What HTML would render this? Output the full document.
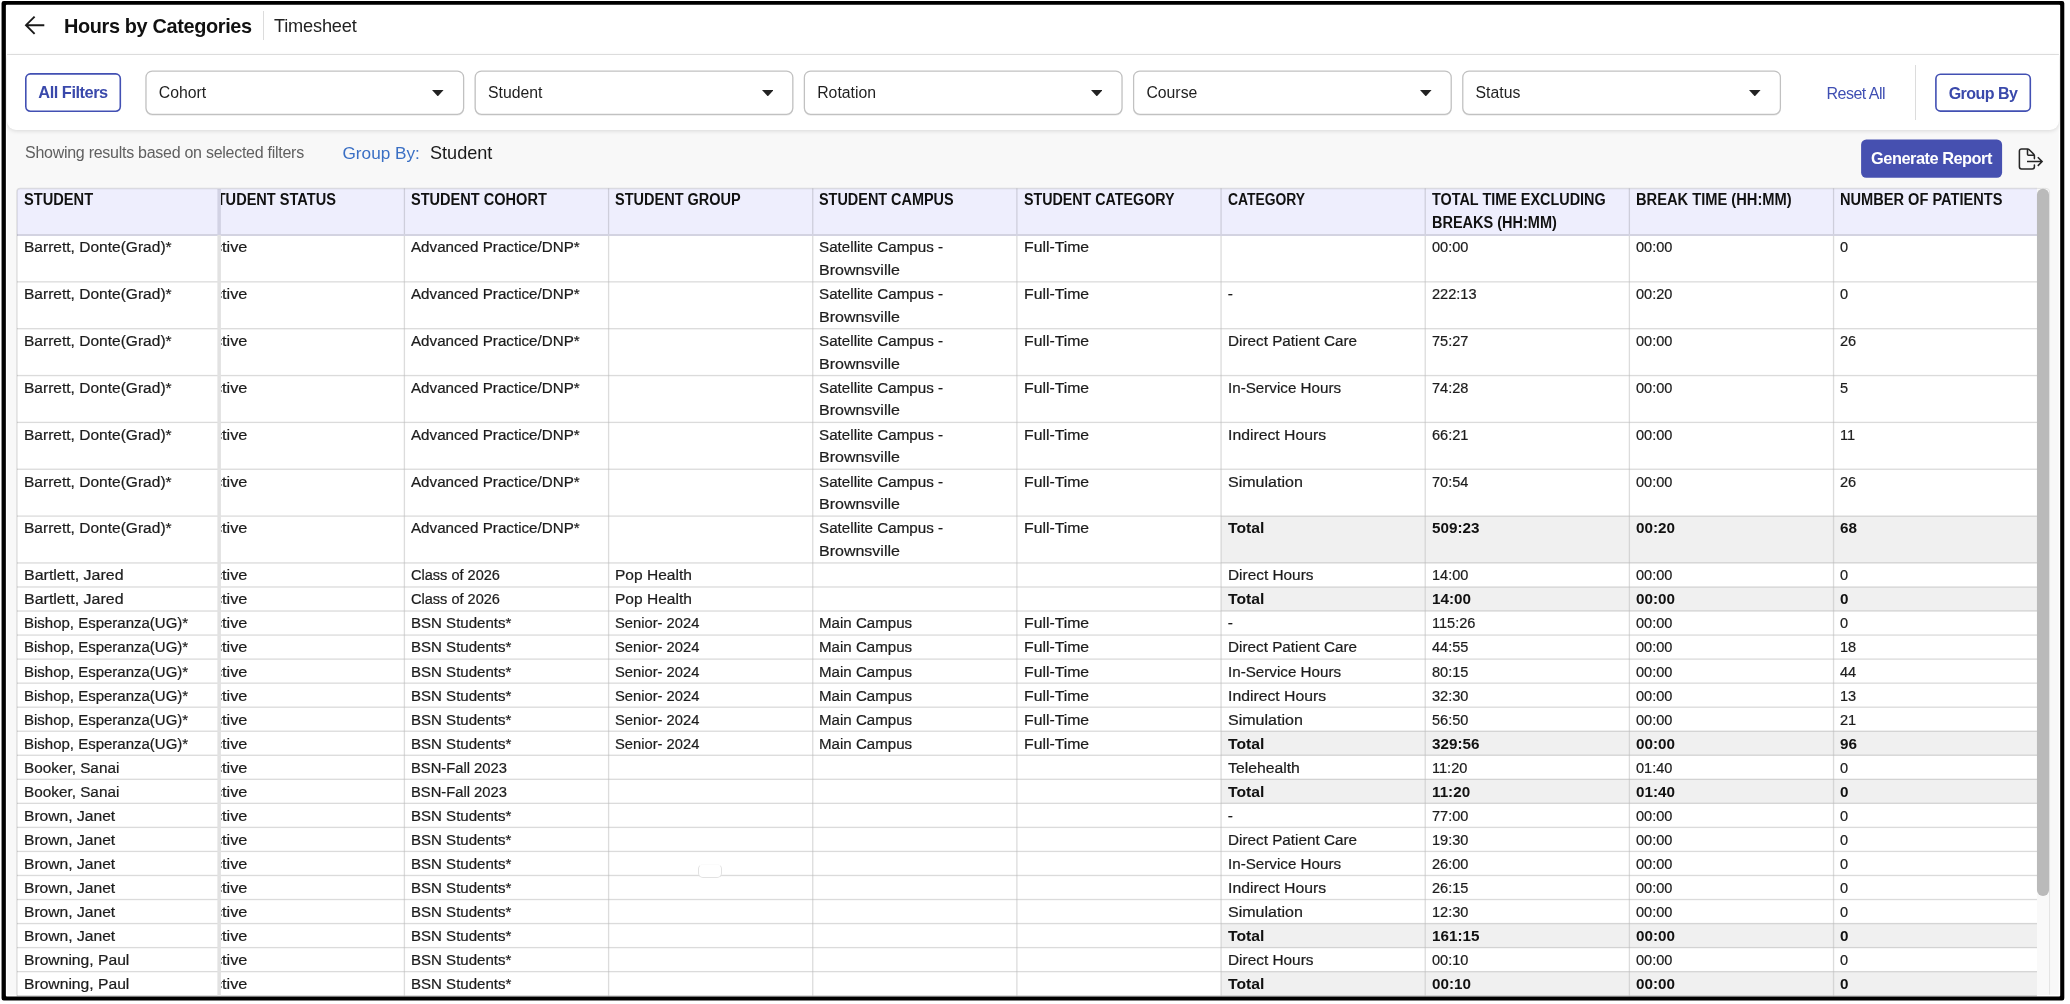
<!DOCTYPE html>
<html lang="en">
<head>
<meta charset="utf-8">
<title>Hours by Categories</title>
<style>
*{box-sizing:border-box;margin:0;padding:0}
html,body{width:2070px;height:1004px;overflow:hidden;background:#fff}
body{font-family:"Liberation Sans",sans-serif;font-size:16px;color:#1c1c1c;position:relative}
.abs{position:absolute}
#all{position:absolute;left:0;top:0;width:2070px;height:1004px;will-change:transform}
#top{position:absolute;left:7px;top:5px;width:2052px;height:50px;background:#fff;border-bottom:1px solid #e4e4e4}
#filters{position:absolute;left:7px;top:55px;width:2052px;height:75px;background:#fff;border-radius:0 0 9px 9px;box-shadow:0 1px 4px rgba(0,0,0,.13)}
.title{position:absolute;left:64px;top:13.7px;font-size:19.9px;letter-spacing:-.36px;font-weight:700;line-height:24px;color:#111;white-space:nowrap}
.sub{position:absolute;left:274px;top:14.2px;font-size:18.2px;letter-spacing:-.18px;line-height:24px;color:#222;white-space:nowrap}
.vdiv{position:absolute;background:#dcdcdc;width:1px}
.btn-o{position:absolute;color:#3a49ab;font-weight:700;font-size:16.4px;letter-spacing:-.48px;text-align:center;white-space:nowrap}
.dd{position:absolute;top:70.5px;height:44.4px;width:318.8px;font-size:15.8px;line-height:44.6px;padding-left:13.4px;color:#1f1f1f}
.dd svg{position:absolute;right:20.2px;top:19.1px}
.reset{position:absolute;left:1826.5px;top:81.5px;font-size:16px;letter-spacing:-.5px;line-height:24px;color:#3f4fb3;white-space:nowrap}
.show{position:absolute;left:25px;top:141px;font-size:16px;letter-spacing:-.27px;line-height:24px;color:#606060;white-space:nowrap}
.gb{position:absolute;left:342.5px;top:141px;font-size:17.2px;line-height:24px;color:#3a6fc4;white-space:nowrap}
.gbv{position:absolute;left:430px;top:141px;font-size:18.1px;line-height:24px;color:#1a1a1a;white-space:nowrap}
.gen{position:absolute;left:1861px;top:139.5px;width:141px;height:38.5px;color:#fff;font-weight:700;font-size:16.4px;letter-spacing:-.5px;line-height:37.6px;text-align:center;white-space:nowrap}

/* table */
.tbl{position:absolute;left:0;top:0;width:2070px;height:996.4px;overflow:hidden}
.c{position:absolute;overflow:hidden;padding-top:.9px;line-height:22.5px;font-size:15.4px;white-space:nowrap;color:#1c1c1c;-webkit-text-stroke:.22px #1c1c1c}
.x{display:inline-block;transform-origin:0 50%;white-space:nowrap}
.c.h{font-size:16px;font-weight:700;color:#111;padding-top:.2px;-webkit-text-stroke:0}
.c.b{font-weight:700;color:#111;-webkit-text-stroke:0}
#blip{position:absolute;left:698px;top:864px;width:24px;height:14px;border:1px solid #e2e2e2;border-top-color:#fbfbfb;border-radius:5px;background:#fff}
</style>
</head>
<body>
<div id="all">
<svg class="abs" style="left:0;top:0" width="2070" height="1004" viewBox="0 0 2070 1004"><rect x="7.2" y="5" width="2051.5" height="989.7" fill="#f8f8f8"/></svg>

<svg class="abs" style="left:0;top:0" width="2070" height="1004" viewBox="0 0 2070 1004"><rect x="17.00" y="188.40" width="2020.00" height="808.00" fill="#fff" rx="3"/><path d="M17.00 236.00V191.40a3 3 0 0 1 3-3H2037.00V236.00z" fill="#eeeefd"/><rect x="1221.06" y="516.10" width="815.94" height="46.85" fill="#f0f0f0"/><rect x="1221.06" y="586.99" width="815.94" height="24.04" fill="#f0f0f0"/><rect x="1221.06" y="731.23" width="815.94" height="24.04" fill="#f0f0f0"/><rect x="1221.06" y="779.31" width="815.94" height="24.04" fill="#f0f0f0"/><rect x="1221.06" y="923.55" width="815.94" height="24.04" fill="#f0f0f0"/><rect x="1221.06" y="971.63" width="815.94" height="24.04" fill="#f0f0f0"/><rect x="17.00" y="234.00" width="2020.00" height="2.00" fill="#000" fill-opacity=".11"/><rect x="17.00" y="281.18" width="2020.00" height="1.34" fill="#000" fill-opacity=".14"/><rect x="17.00" y="328.03" width="2020.00" height="1.34" fill="#000" fill-opacity=".14"/><rect x="17.00" y="374.88" width="2020.00" height="1.34" fill="#000" fill-opacity=".14"/><rect x="17.00" y="421.73" width="2020.00" height="1.34" fill="#000" fill-opacity=".14"/><rect x="17.00" y="468.58" width="2020.00" height="1.34" fill="#000" fill-opacity=".14"/><rect x="17.00" y="515.43" width="2020.00" height="1.34" fill="#000" fill-opacity=".14"/><rect x="17.00" y="562.28" width="2020.00" height="1.34" fill="#000" fill-opacity=".14"/><rect x="17.00" y="586.32" width="2020.00" height="1.34" fill="#000" fill-opacity=".14"/><rect x="17.00" y="610.36" width="2020.00" height="1.34" fill="#000" fill-opacity=".14"/><rect x="17.00" y="634.40" width="2020.00" height="1.34" fill="#000" fill-opacity=".14"/><rect x="17.00" y="658.44" width="2020.00" height="1.34" fill="#000" fill-opacity=".14"/><rect x="17.00" y="682.48" width="2020.00" height="1.34" fill="#000" fill-opacity=".14"/><rect x="17.00" y="706.52" width="2020.00" height="1.34" fill="#000" fill-opacity=".14"/><rect x="17.00" y="730.56" width="2020.00" height="1.34" fill="#000" fill-opacity=".14"/><rect x="17.00" y="754.60" width="2020.00" height="1.34" fill="#000" fill-opacity=".14"/><rect x="17.00" y="778.64" width="2020.00" height="1.34" fill="#000" fill-opacity=".14"/><rect x="17.00" y="802.68" width="2020.00" height="1.34" fill="#000" fill-opacity=".14"/><rect x="17.00" y="826.72" width="2020.00" height="1.34" fill="#000" fill-opacity=".14"/><rect x="17.00" y="850.76" width="2020.00" height="1.34" fill="#000" fill-opacity=".14"/><rect x="17.00" y="874.80" width="2020.00" height="1.34" fill="#000" fill-opacity=".14"/><rect x="17.00" y="898.84" width="2020.00" height="1.34" fill="#000" fill-opacity=".14"/><rect x="17.00" y="922.88" width="2020.00" height="1.34" fill="#000" fill-opacity=".14"/><rect x="17.00" y="946.92" width="2020.00" height="1.34" fill="#000" fill-opacity=".14"/><rect x="17.00" y="970.96" width="2020.00" height="1.34" fill="#000" fill-opacity=".14"/><rect x="17.00" y="995.00" width="2020.00" height="1.34" fill="#000" fill-opacity=".14"/><rect x="403.77" y="188.40" width="1.30" height="45.60" fill="#000" fill-opacity=".135"/><rect x="403.77" y="236.00" width="1.30" height="760.40" fill="#dcdcdc" fill-opacity=".5"/><rect x="403.77" y="236.00" width="1.30" height="760.40" fill="#000" fill-opacity=".07"/><rect x="607.93" y="188.40" width="1.30" height="45.60" fill="#000" fill-opacity=".135"/><rect x="607.93" y="236.00" width="1.30" height="760.40" fill="#dcdcdc" fill-opacity=".5"/><rect x="607.93" y="236.00" width="1.30" height="760.40" fill="#000" fill-opacity=".07"/><rect x="812.09" y="188.40" width="1.30" height="45.60" fill="#000" fill-opacity=".135"/><rect x="812.09" y="236.00" width="1.30" height="760.40" fill="#dcdcdc" fill-opacity=".5"/><rect x="812.09" y="236.00" width="1.30" height="760.40" fill="#000" fill-opacity=".07"/><rect x="1016.25" y="188.40" width="1.30" height="45.60" fill="#000" fill-opacity=".135"/><rect x="1016.25" y="236.00" width="1.30" height="760.40" fill="#dcdcdc" fill-opacity=".5"/><rect x="1016.25" y="236.00" width="1.30" height="760.40" fill="#000" fill-opacity=".07"/><rect x="1220.41" y="188.40" width="1.30" height="45.60" fill="#000" fill-opacity=".135"/><rect x="1220.41" y="236.00" width="1.30" height="760.40" fill="#dcdcdc" fill-opacity=".5"/><rect x="1220.41" y="236.00" width="1.30" height="760.40" fill="#000" fill-opacity=".07"/><rect x="1424.57" y="188.40" width="1.30" height="45.60" fill="#000" fill-opacity=".135"/><rect x="1424.57" y="236.00" width="1.30" height="760.40" fill="#dcdcdc" fill-opacity=".5"/><rect x="1424.57" y="236.00" width="1.30" height="760.40" fill="#000" fill-opacity=".07"/><rect x="1628.73" y="188.40" width="1.30" height="45.60" fill="#000" fill-opacity=".135"/><rect x="1628.73" y="236.00" width="1.30" height="760.40" fill="#dcdcdc" fill-opacity=".5"/><rect x="1628.73" y="236.00" width="1.30" height="760.40" fill="#000" fill-opacity=".07"/><rect x="1832.89" y="188.40" width="1.30" height="45.60" fill="#000" fill-opacity=".135"/><rect x="1832.89" y="236.00" width="1.30" height="760.40" fill="#dcdcdc" fill-opacity=".5"/><rect x="1832.89" y="236.00" width="1.30" height="760.40" fill="#000" fill-opacity=".07"/><rect x="17.50" y="236.00" width="199.90" height="0.01" fill="#fff"/><rect x="217.40" y="189.00" width="3.50" height="46.00" fill="#d2d2e4"/><rect x="217.40" y="235.00" width="3.50" height="761.40" fill="#e2e2e2"/><path d="M17.00 996.40V191.70a3.2 3.2 0 0 1 3.2-3.2H2037.00" fill="none" stroke="#000" stroke-opacity=".11" stroke-width="1.5"/></svg>
<div class="tbl">
<div class="c h" style="left:220.90px;top:189.00px;width:183.52px;height:46.00px"><div style="margin-left:-13.94px"><span class="x" style="transform:scaleX(0.9102)">STUDENT STATUS</span></div></div>
<div class="c h" style="left:411.12px;top:189.00px;width:196.46px;height:46.00px"><span class="x" style="transform:scaleX(0.9094)">STUDENT COHORT</span></div>
<div class="c h" style="left:615.28px;top:189.00px;width:196.46px;height:46.00px"><span class="x" style="transform:scaleX(0.9065)">STUDENT GROUP</span></div>
<div class="c h" style="left:819.44px;top:189.00px;width:196.46px;height:46.00px"><span class="x" style="transform:scaleX(0.9014)">STUDENT CAMPUS</span></div>
<div class="c h" style="left:1023.60px;top:189.00px;width:196.46px;height:46.00px"><span class="x" style="transform:scaleX(0.8912)">STUDENT CATEGORY</span></div>
<div class="c h" style="left:1227.76px;top:189.00px;width:196.46px;height:46.00px"><span class="x" style="transform:scaleX(0.8675)">CATEGORY</span></div>
<div class="c h" style="left:1431.92px;top:189.00px;width:196.46px;height:46.00px"><span class="x" style="transform:scaleX(0.9002)">TOTAL TIME EXCLUDING</span><br><span class="x" style="transform:scaleX(0.9060)">BREAKS (HH:MM)</span></div>
<div class="c h" style="left:1636.08px;top:189.00px;width:196.46px;height:46.00px"><span class="x" style="transform:scaleX(0.9167)">BREAK TIME (HH:MM)</span></div>
<div class="c h" style="left:1840.24px;top:189.00px;width:196.46px;height:46.00px"><span class="x" style="transform:scaleX(0.9121)">NUMBER OF PATIENTS</span></div>
<div class="c h" style="left:23.70px;top:189.00px;width:190px;height:46.00px"><span class="x" style="transform:scaleX(0.9145)">STUDENT</span></div>
<div class="c" style="left:220.90px;top:235.50px;width:183.52px;height:46.35px"><div style="margin-left:-17.54px"><span class="x" style="transform:scaleX(1.0600)">Active</span></div></div>
<div class="c" style="left:411.12px;top:235.50px;width:196.46px;height:46.35px"><span class="x" style="transform:scaleX(0.9860)">Advanced Practice/DNP*</span></div>
<div class="c" style="left:819.44px;top:235.50px;width:196.46px;height:46.35px"><span class="x" style="transform:scaleX(0.9871)">Satellite Campus -</span><br><span class="x" style="transform:scaleX(1.0397)">Brownsville</span></div>
<div class="c" style="left:1023.60px;top:235.50px;width:196.46px;height:46.35px"><span class="x" style="transform:scaleX(1.0243)">Full-Time</span></div>
<div class="c" style="left:1431.92px;top:235.50px;width:196.46px;height:46.35px"><span class="x" style="transform:scaleX(0.9450)">00:00</span></div>
<div class="c" style="left:1636.08px;top:235.50px;width:196.46px;height:46.35px"><span class="x" style="transform:scaleX(0.9450)">00:00</span></div>
<div class="c" style="left:1840.24px;top:235.50px;width:196.46px;height:46.35px"><span class="x" style="transform:scaleX(0.9450)">0</span></div>
<div class="c" style="left:23.70px;top:235.50px;width:190px;height:46.35px"><span class="x" style="transform:scaleX(1.0091)">Barrett, Donte(Grad)*</span></div>
<div class="c" style="left:220.90px;top:282.35px;width:183.52px;height:46.35px"><div style="margin-left:-17.54px"><span class="x" style="transform:scaleX(1.0600)">Active</span></div></div>
<div class="c" style="left:411.12px;top:282.35px;width:196.46px;height:46.35px"><span class="x" style="transform:scaleX(0.9860)">Advanced Practice/DNP*</span></div>
<div class="c" style="left:819.44px;top:282.35px;width:196.46px;height:46.35px"><span class="x" style="transform:scaleX(0.9871)">Satellite Campus -</span><br><span class="x" style="transform:scaleX(1.0397)">Brownsville</span></div>
<div class="c" style="left:1023.60px;top:282.35px;width:196.46px;height:46.35px"><span class="x" style="transform:scaleX(1.0243)">Full-Time</span></div>
<div class="c" style="left:1227.76px;top:282.35px;width:196.46px;height:46.35px"><span class="x" style="transform:scaleX(1.0000)">-</span></div>
<div class="c" style="left:1431.92px;top:282.35px;width:196.46px;height:46.35px"><span class="x" style="transform:scaleX(0.9450)">222:13</span></div>
<div class="c" style="left:1636.08px;top:282.35px;width:196.46px;height:46.35px"><span class="x" style="transform:scaleX(0.9450)">00:20</span></div>
<div class="c" style="left:1840.24px;top:282.35px;width:196.46px;height:46.35px"><span class="x" style="transform:scaleX(0.9450)">0</span></div>
<div class="c" style="left:23.70px;top:282.35px;width:190px;height:46.35px"><span class="x" style="transform:scaleX(1.0091)">Barrett, Donte(Grad)*</span></div>
<div class="c" style="left:220.90px;top:329.20px;width:183.52px;height:46.35px"><div style="margin-left:-17.54px"><span class="x" style="transform:scaleX(1.0600)">Active</span></div></div>
<div class="c" style="left:411.12px;top:329.20px;width:196.46px;height:46.35px"><span class="x" style="transform:scaleX(0.9860)">Advanced Practice/DNP*</span></div>
<div class="c" style="left:819.44px;top:329.20px;width:196.46px;height:46.35px"><span class="x" style="transform:scaleX(0.9871)">Satellite Campus -</span><br><span class="x" style="transform:scaleX(1.0397)">Brownsville</span></div>
<div class="c" style="left:1023.60px;top:329.20px;width:196.46px;height:46.35px"><span class="x" style="transform:scaleX(1.0243)">Full-Time</span></div>
<div class="c" style="left:1227.76px;top:329.20px;width:196.46px;height:46.35px"><span class="x" style="transform:scaleX(0.9926)">Direct Patient Care</span></div>
<div class="c" style="left:1431.92px;top:329.20px;width:196.46px;height:46.35px"><span class="x" style="transform:scaleX(0.9450)">75:27</span></div>
<div class="c" style="left:1636.08px;top:329.20px;width:196.46px;height:46.35px"><span class="x" style="transform:scaleX(0.9450)">00:00</span></div>
<div class="c" style="left:1840.24px;top:329.20px;width:196.46px;height:46.35px"><span class="x" style="transform:scaleX(0.9450)">26</span></div>
<div class="c" style="left:23.70px;top:329.20px;width:190px;height:46.35px"><span class="x" style="transform:scaleX(1.0091)">Barrett, Donte(Grad)*</span></div>
<div class="c" style="left:220.90px;top:376.05px;width:183.52px;height:46.35px"><div style="margin-left:-17.54px"><span class="x" style="transform:scaleX(1.0600)">Active</span></div></div>
<div class="c" style="left:411.12px;top:376.05px;width:196.46px;height:46.35px"><span class="x" style="transform:scaleX(0.9860)">Advanced Practice/DNP*</span></div>
<div class="c" style="left:819.44px;top:376.05px;width:196.46px;height:46.35px"><span class="x" style="transform:scaleX(0.9871)">Satellite Campus -</span><br><span class="x" style="transform:scaleX(1.0397)">Brownsville</span></div>
<div class="c" style="left:1023.60px;top:376.05px;width:196.46px;height:46.35px"><span class="x" style="transform:scaleX(1.0243)">Full-Time</span></div>
<div class="c" style="left:1227.76px;top:376.05px;width:196.46px;height:46.35px"><span class="x" style="transform:scaleX(0.9867)">In-Service Hours</span></div>
<div class="c" style="left:1431.92px;top:376.05px;width:196.46px;height:46.35px"><span class="x" style="transform:scaleX(0.9450)">74:28</span></div>
<div class="c" style="left:1636.08px;top:376.05px;width:196.46px;height:46.35px"><span class="x" style="transform:scaleX(0.9450)">00:00</span></div>
<div class="c" style="left:1840.24px;top:376.05px;width:196.46px;height:46.35px"><span class="x" style="transform:scaleX(0.9450)">5</span></div>
<div class="c" style="left:23.70px;top:376.05px;width:190px;height:46.35px"><span class="x" style="transform:scaleX(1.0091)">Barrett, Donte(Grad)*</span></div>
<div class="c" style="left:220.90px;top:422.90px;width:183.52px;height:46.35px"><div style="margin-left:-17.54px"><span class="x" style="transform:scaleX(1.0600)">Active</span></div></div>
<div class="c" style="left:411.12px;top:422.90px;width:196.46px;height:46.35px"><span class="x" style="transform:scaleX(0.9860)">Advanced Practice/DNP*</span></div>
<div class="c" style="left:819.44px;top:422.90px;width:196.46px;height:46.35px"><span class="x" style="transform:scaleX(0.9871)">Satellite Campus -</span><br><span class="x" style="transform:scaleX(1.0397)">Brownsville</span></div>
<div class="c" style="left:1023.60px;top:422.90px;width:196.46px;height:46.35px"><span class="x" style="transform:scaleX(1.0243)">Full-Time</span></div>
<div class="c" style="left:1227.76px;top:422.90px;width:196.46px;height:46.35px"><span class="x" style="transform:scaleX(1.0241)">Indirect Hours</span></div>
<div class="c" style="left:1431.92px;top:422.90px;width:196.46px;height:46.35px"><span class="x" style="transform:scaleX(0.9450)">66:21</span></div>
<div class="c" style="left:1636.08px;top:422.90px;width:196.46px;height:46.35px"><span class="x" style="transform:scaleX(0.9450)">00:00</span></div>
<div class="c" style="left:1840.24px;top:422.90px;width:196.46px;height:46.35px"><span class="x" style="transform:scaleX(0.9450)">11</span></div>
<div class="c" style="left:23.70px;top:422.90px;width:190px;height:46.35px"><span class="x" style="transform:scaleX(1.0091)">Barrett, Donte(Grad)*</span></div>
<div class="c" style="left:220.90px;top:469.75px;width:183.52px;height:46.35px"><div style="margin-left:-17.54px"><span class="x" style="transform:scaleX(1.0600)">Active</span></div></div>
<div class="c" style="left:411.12px;top:469.75px;width:196.46px;height:46.35px"><span class="x" style="transform:scaleX(0.9860)">Advanced Practice/DNP*</span></div>
<div class="c" style="left:819.44px;top:469.75px;width:196.46px;height:46.35px"><span class="x" style="transform:scaleX(0.9871)">Satellite Campus -</span><br><span class="x" style="transform:scaleX(1.0397)">Brownsville</span></div>
<div class="c" style="left:1023.60px;top:469.75px;width:196.46px;height:46.35px"><span class="x" style="transform:scaleX(1.0243)">Full-Time</span></div>
<div class="c" style="left:1227.76px;top:469.75px;width:196.46px;height:46.35px"><span class="x" style="transform:scaleX(1.0421)">Simulation</span></div>
<div class="c" style="left:1431.92px;top:469.75px;width:196.46px;height:46.35px"><span class="x" style="transform:scaleX(0.9450)">70:54</span></div>
<div class="c" style="left:1636.08px;top:469.75px;width:196.46px;height:46.35px"><span class="x" style="transform:scaleX(0.9450)">00:00</span></div>
<div class="c" style="left:1840.24px;top:469.75px;width:196.46px;height:46.35px"><span class="x" style="transform:scaleX(0.9450)">26</span></div>
<div class="c" style="left:23.70px;top:469.75px;width:190px;height:46.35px"><span class="x" style="transform:scaleX(1.0091)">Barrett, Donte(Grad)*</span></div>
<div class="c" style="left:220.90px;top:516.60px;width:183.52px;height:46.35px"><div style="margin-left:-17.54px"><span class="x" style="transform:scaleX(1.0600)">Active</span></div></div>
<div class="c" style="left:411.12px;top:516.60px;width:196.46px;height:46.35px"><span class="x" style="transform:scaleX(0.9860)">Advanced Practice/DNP*</span></div>
<div class="c" style="left:819.44px;top:516.60px;width:196.46px;height:46.35px"><span class="x" style="transform:scaleX(0.9871)">Satellite Campus -</span><br><span class="x" style="transform:scaleX(1.0397)">Brownsville</span></div>
<div class="c" style="left:1023.60px;top:516.60px;width:196.46px;height:46.35px"><span class="x" style="transform:scaleX(1.0243)">Full-Time</span></div>
<div class="c b" style="left:1227.76px;top:516.60px;width:196.46px;height:46.35px"><span class="x" style="transform:scaleX(1.0214)">Total</span></div>
<div class="c b" style="left:1431.92px;top:516.60px;width:196.46px;height:46.35px"><span class="x" style="transform:scaleX(0.9900)">509:23</span></div>
<div class="c b" style="left:1636.08px;top:516.60px;width:196.46px;height:46.35px"><span class="x" style="transform:scaleX(0.9900)">00:20</span></div>
<div class="c b" style="left:1840.24px;top:516.60px;width:196.46px;height:46.35px"><span class="x" style="transform:scaleX(0.9900)">68</span></div>
<div class="c" style="left:23.70px;top:516.60px;width:190px;height:46.35px"><span class="x" style="transform:scaleX(1.0091)">Barrett, Donte(Grad)*</span></div>
<div class="c" style="left:220.90px;top:563.45px;width:183.52px;height:23.54px"><div style="margin-left:-17.54px"><span class="x" style="transform:scaleX(1.0600)">Active</span></div></div>
<div class="c" style="left:411.12px;top:563.45px;width:196.46px;height:23.54px"><span class="x" style="transform:scaleX(0.9449)">Class of 2026</span></div>
<div class="c" style="left:615.28px;top:563.45px;width:196.46px;height:23.54px"><span class="x" style="transform:scaleX(1.0095)">Pop Health</span></div>
<div class="c" style="left:1227.76px;top:563.45px;width:196.46px;height:23.54px"><span class="x" style="transform:scaleX(0.9997)">Direct Hours</span></div>
<div class="c" style="left:1431.92px;top:563.45px;width:196.46px;height:23.54px"><span class="x" style="transform:scaleX(0.9450)">14:00</span></div>
<div class="c" style="left:1636.08px;top:563.45px;width:196.46px;height:23.54px"><span class="x" style="transform:scaleX(0.9450)">00:00</span></div>
<div class="c" style="left:1840.24px;top:563.45px;width:196.46px;height:23.54px"><span class="x" style="transform:scaleX(0.9450)">0</span></div>
<div class="c" style="left:23.70px;top:563.45px;width:190px;height:23.54px"><span class="x" style="transform:scaleX(1.0387)">Bartlett, Jared</span></div>
<div class="c" style="left:220.90px;top:587.49px;width:183.52px;height:23.54px"><div style="margin-left:-17.54px"><span class="x" style="transform:scaleX(1.0600)">Active</span></div></div>
<div class="c" style="left:411.12px;top:587.49px;width:196.46px;height:23.54px"><span class="x" style="transform:scaleX(0.9449)">Class of 2026</span></div>
<div class="c" style="left:615.28px;top:587.49px;width:196.46px;height:23.54px"><span class="x" style="transform:scaleX(1.0095)">Pop Health</span></div>
<div class="c b" style="left:1227.76px;top:587.49px;width:196.46px;height:23.54px"><span class="x" style="transform:scaleX(1.0214)">Total</span></div>
<div class="c b" style="left:1431.92px;top:587.49px;width:196.46px;height:23.54px"><span class="x" style="transform:scaleX(0.9900)">14:00</span></div>
<div class="c b" style="left:1636.08px;top:587.49px;width:196.46px;height:23.54px"><span class="x" style="transform:scaleX(0.9900)">00:00</span></div>
<div class="c b" style="left:1840.24px;top:587.49px;width:196.46px;height:23.54px"><span class="x" style="transform:scaleX(0.9900)">0</span></div>
<div class="c" style="left:23.70px;top:587.49px;width:190px;height:23.54px"><span class="x" style="transform:scaleX(1.0387)">Bartlett, Jared</span></div>
<div class="c" style="left:220.90px;top:611.53px;width:183.52px;height:23.54px"><div style="margin-left:-17.54px"><span class="x" style="transform:scaleX(1.0600)">Active</span></div></div>
<div class="c" style="left:411.12px;top:611.53px;width:196.46px;height:23.54px"><span class="x" style="transform:scaleX(0.9776)">BSN Students*</span></div>
<div class="c" style="left:615.28px;top:611.53px;width:196.46px;height:23.54px"><span class="x" style="transform:scaleX(0.9575)">Senior- 2024</span></div>
<div class="c" style="left:819.44px;top:611.53px;width:196.46px;height:23.54px"><span class="x" style="transform:scaleX(0.9804)">Main Campus</span></div>
<div class="c" style="left:1023.60px;top:611.53px;width:196.46px;height:23.54px"><span class="x" style="transform:scaleX(1.0243)">Full-Time</span></div>
<div class="c" style="left:1227.76px;top:611.53px;width:196.46px;height:23.54px"><span class="x" style="transform:scaleX(1.0000)">-</span></div>
<div class="c" style="left:1431.92px;top:611.53px;width:196.46px;height:23.54px"><span class="x" style="transform:scaleX(0.9450)">115:26</span></div>
<div class="c" style="left:1636.08px;top:611.53px;width:196.46px;height:23.54px"><span class="x" style="transform:scaleX(0.9450)">00:00</span></div>
<div class="c" style="left:1840.24px;top:611.53px;width:196.46px;height:23.54px"><span class="x" style="transform:scaleX(0.9450)">0</span></div>
<div class="c" style="left:23.70px;top:611.53px;width:190px;height:23.54px"><span class="x" style="transform:scaleX(0.9742)">Bishop, Esperanza(UG)*</span></div>
<div class="c" style="left:220.90px;top:635.57px;width:183.52px;height:23.54px"><div style="margin-left:-17.54px"><span class="x" style="transform:scaleX(1.0600)">Active</span></div></div>
<div class="c" style="left:411.12px;top:635.57px;width:196.46px;height:23.54px"><span class="x" style="transform:scaleX(0.9776)">BSN Students*</span></div>
<div class="c" style="left:615.28px;top:635.57px;width:196.46px;height:23.54px"><span class="x" style="transform:scaleX(0.9575)">Senior- 2024</span></div>
<div class="c" style="left:819.44px;top:635.57px;width:196.46px;height:23.54px"><span class="x" style="transform:scaleX(0.9804)">Main Campus</span></div>
<div class="c" style="left:1023.60px;top:635.57px;width:196.46px;height:23.54px"><span class="x" style="transform:scaleX(1.0243)">Full-Time</span></div>
<div class="c" style="left:1227.76px;top:635.57px;width:196.46px;height:23.54px"><span class="x" style="transform:scaleX(0.9926)">Direct Patient Care</span></div>
<div class="c" style="left:1431.92px;top:635.57px;width:196.46px;height:23.54px"><span class="x" style="transform:scaleX(0.9450)">44:55</span></div>
<div class="c" style="left:1636.08px;top:635.57px;width:196.46px;height:23.54px"><span class="x" style="transform:scaleX(0.9450)">00:00</span></div>
<div class="c" style="left:1840.24px;top:635.57px;width:196.46px;height:23.54px"><span class="x" style="transform:scaleX(0.9450)">18</span></div>
<div class="c" style="left:23.70px;top:635.57px;width:190px;height:23.54px"><span class="x" style="transform:scaleX(0.9742)">Bishop, Esperanza(UG)*</span></div>
<div class="c" style="left:220.90px;top:659.61px;width:183.52px;height:23.54px"><div style="margin-left:-17.54px"><span class="x" style="transform:scaleX(1.0600)">Active</span></div></div>
<div class="c" style="left:411.12px;top:659.61px;width:196.46px;height:23.54px"><span class="x" style="transform:scaleX(0.9776)">BSN Students*</span></div>
<div class="c" style="left:615.28px;top:659.61px;width:196.46px;height:23.54px"><span class="x" style="transform:scaleX(0.9575)">Senior- 2024</span></div>
<div class="c" style="left:819.44px;top:659.61px;width:196.46px;height:23.54px"><span class="x" style="transform:scaleX(0.9804)">Main Campus</span></div>
<div class="c" style="left:1023.60px;top:659.61px;width:196.46px;height:23.54px"><span class="x" style="transform:scaleX(1.0243)">Full-Time</span></div>
<div class="c" style="left:1227.76px;top:659.61px;width:196.46px;height:23.54px"><span class="x" style="transform:scaleX(0.9867)">In-Service Hours</span></div>
<div class="c" style="left:1431.92px;top:659.61px;width:196.46px;height:23.54px"><span class="x" style="transform:scaleX(0.9450)">80:15</span></div>
<div class="c" style="left:1636.08px;top:659.61px;width:196.46px;height:23.54px"><span class="x" style="transform:scaleX(0.9450)">00:00</span></div>
<div class="c" style="left:1840.24px;top:659.61px;width:196.46px;height:23.54px"><span class="x" style="transform:scaleX(0.9450)">44</span></div>
<div class="c" style="left:23.70px;top:659.61px;width:190px;height:23.54px"><span class="x" style="transform:scaleX(0.9742)">Bishop, Esperanza(UG)*</span></div>
<div class="c" style="left:220.90px;top:683.65px;width:183.52px;height:23.54px"><div style="margin-left:-17.54px"><span class="x" style="transform:scaleX(1.0600)">Active</span></div></div>
<div class="c" style="left:411.12px;top:683.65px;width:196.46px;height:23.54px"><span class="x" style="transform:scaleX(0.9776)">BSN Students*</span></div>
<div class="c" style="left:615.28px;top:683.65px;width:196.46px;height:23.54px"><span class="x" style="transform:scaleX(0.9575)">Senior- 2024</span></div>
<div class="c" style="left:819.44px;top:683.65px;width:196.46px;height:23.54px"><span class="x" style="transform:scaleX(0.9804)">Main Campus</span></div>
<div class="c" style="left:1023.60px;top:683.65px;width:196.46px;height:23.54px"><span class="x" style="transform:scaleX(1.0243)">Full-Time</span></div>
<div class="c" style="left:1227.76px;top:683.65px;width:196.46px;height:23.54px"><span class="x" style="transform:scaleX(1.0241)">Indirect Hours</span></div>
<div class="c" style="left:1431.92px;top:683.65px;width:196.46px;height:23.54px"><span class="x" style="transform:scaleX(0.9450)">32:30</span></div>
<div class="c" style="left:1636.08px;top:683.65px;width:196.46px;height:23.54px"><span class="x" style="transform:scaleX(0.9450)">00:00</span></div>
<div class="c" style="left:1840.24px;top:683.65px;width:196.46px;height:23.54px"><span class="x" style="transform:scaleX(0.9450)">13</span></div>
<div class="c" style="left:23.70px;top:683.65px;width:190px;height:23.54px"><span class="x" style="transform:scaleX(0.9742)">Bishop, Esperanza(UG)*</span></div>
<div class="c" style="left:220.90px;top:707.69px;width:183.52px;height:23.54px"><div style="margin-left:-17.54px"><span class="x" style="transform:scaleX(1.0600)">Active</span></div></div>
<div class="c" style="left:411.12px;top:707.69px;width:196.46px;height:23.54px"><span class="x" style="transform:scaleX(0.9776)">BSN Students*</span></div>
<div class="c" style="left:615.28px;top:707.69px;width:196.46px;height:23.54px"><span class="x" style="transform:scaleX(0.9575)">Senior- 2024</span></div>
<div class="c" style="left:819.44px;top:707.69px;width:196.46px;height:23.54px"><span class="x" style="transform:scaleX(0.9804)">Main Campus</span></div>
<div class="c" style="left:1023.60px;top:707.69px;width:196.46px;height:23.54px"><span class="x" style="transform:scaleX(1.0243)">Full-Time</span></div>
<div class="c" style="left:1227.76px;top:707.69px;width:196.46px;height:23.54px"><span class="x" style="transform:scaleX(1.0421)">Simulation</span></div>
<div class="c" style="left:1431.92px;top:707.69px;width:196.46px;height:23.54px"><span class="x" style="transform:scaleX(0.9450)">56:50</span></div>
<div class="c" style="left:1636.08px;top:707.69px;width:196.46px;height:23.54px"><span class="x" style="transform:scaleX(0.9450)">00:00</span></div>
<div class="c" style="left:1840.24px;top:707.69px;width:196.46px;height:23.54px"><span class="x" style="transform:scaleX(0.9450)">21</span></div>
<div class="c" style="left:23.70px;top:707.69px;width:190px;height:23.54px"><span class="x" style="transform:scaleX(0.9742)">Bishop, Esperanza(UG)*</span></div>
<div class="c" style="left:220.90px;top:731.73px;width:183.52px;height:23.54px"><div style="margin-left:-17.54px"><span class="x" style="transform:scaleX(1.0600)">Active</span></div></div>
<div class="c" style="left:411.12px;top:731.73px;width:196.46px;height:23.54px"><span class="x" style="transform:scaleX(0.9776)">BSN Students*</span></div>
<div class="c" style="left:615.28px;top:731.73px;width:196.46px;height:23.54px"><span class="x" style="transform:scaleX(0.9575)">Senior- 2024</span></div>
<div class="c" style="left:819.44px;top:731.73px;width:196.46px;height:23.54px"><span class="x" style="transform:scaleX(0.9804)">Main Campus</span></div>
<div class="c" style="left:1023.60px;top:731.73px;width:196.46px;height:23.54px"><span class="x" style="transform:scaleX(1.0243)">Full-Time</span></div>
<div class="c b" style="left:1227.76px;top:731.73px;width:196.46px;height:23.54px"><span class="x" style="transform:scaleX(1.0214)">Total</span></div>
<div class="c b" style="left:1431.92px;top:731.73px;width:196.46px;height:23.54px"><span class="x" style="transform:scaleX(0.9900)">329:56</span></div>
<div class="c b" style="left:1636.08px;top:731.73px;width:196.46px;height:23.54px"><span class="x" style="transform:scaleX(0.9900)">00:00</span></div>
<div class="c b" style="left:1840.24px;top:731.73px;width:196.46px;height:23.54px"><span class="x" style="transform:scaleX(0.9900)">96</span></div>
<div class="c" style="left:23.70px;top:731.73px;width:190px;height:23.54px"><span class="x" style="transform:scaleX(0.9742)">Bishop, Esperanza(UG)*</span></div>
<div class="c" style="left:220.90px;top:755.77px;width:183.52px;height:23.54px"><div style="margin-left:-17.54px"><span class="x" style="transform:scaleX(1.0600)">Active</span></div></div>
<div class="c" style="left:411.12px;top:755.77px;width:196.46px;height:23.54px"><span class="x" style="transform:scaleX(0.9581)">BSN-Fall 2023</span></div>
<div class="c" style="left:1227.76px;top:755.77px;width:196.46px;height:23.54px"><span class="x" style="transform:scaleX(1.0243)">Telehealth</span></div>
<div class="c" style="left:1431.92px;top:755.77px;width:196.46px;height:23.54px"><span class="x" style="transform:scaleX(0.9450)">11:20</span></div>
<div class="c" style="left:1636.08px;top:755.77px;width:196.46px;height:23.54px"><span class="x" style="transform:scaleX(0.9450)">01:40</span></div>
<div class="c" style="left:1840.24px;top:755.77px;width:196.46px;height:23.54px"><span class="x" style="transform:scaleX(0.9450)">0</span></div>
<div class="c" style="left:23.70px;top:755.77px;width:190px;height:23.54px"><span class="x" style="transform:scaleX(0.9946)">Booker, Sanai</span></div>
<div class="c" style="left:220.90px;top:779.81px;width:183.52px;height:23.54px"><div style="margin-left:-17.54px"><span class="x" style="transform:scaleX(1.0600)">Active</span></div></div>
<div class="c" style="left:411.12px;top:779.81px;width:196.46px;height:23.54px"><span class="x" style="transform:scaleX(0.9581)">BSN-Fall 2023</span></div>
<div class="c b" style="left:1227.76px;top:779.81px;width:196.46px;height:23.54px"><span class="x" style="transform:scaleX(1.0214)">Total</span></div>
<div class="c b" style="left:1431.92px;top:779.81px;width:196.46px;height:23.54px"><span class="x" style="transform:scaleX(0.9900)">11:20</span></div>
<div class="c b" style="left:1636.08px;top:779.81px;width:196.46px;height:23.54px"><span class="x" style="transform:scaleX(0.9900)">01:40</span></div>
<div class="c b" style="left:1840.24px;top:779.81px;width:196.46px;height:23.54px"><span class="x" style="transform:scaleX(0.9900)">0</span></div>
<div class="c" style="left:23.70px;top:779.81px;width:190px;height:23.54px"><span class="x" style="transform:scaleX(0.9946)">Booker, Sanai</span></div>
<div class="c" style="left:220.90px;top:803.85px;width:183.52px;height:23.54px"><div style="margin-left:-17.54px"><span class="x" style="transform:scaleX(1.0600)">Active</span></div></div>
<div class="c" style="left:411.12px;top:803.85px;width:196.46px;height:23.54px"><span class="x" style="transform:scaleX(0.9776)">BSN Students*</span></div>
<div class="c" style="left:1227.76px;top:803.85px;width:196.46px;height:23.54px"><span class="x" style="transform:scaleX(1.0000)">-</span></div>
<div class="c" style="left:1431.92px;top:803.85px;width:196.46px;height:23.54px"><span class="x" style="transform:scaleX(0.9450)">77:00</span></div>
<div class="c" style="left:1636.08px;top:803.85px;width:196.46px;height:23.54px"><span class="x" style="transform:scaleX(0.9450)">00:00</span></div>
<div class="c" style="left:1840.24px;top:803.85px;width:196.46px;height:23.54px"><span class="x" style="transform:scaleX(0.9450)">0</span></div>
<div class="c" style="left:23.70px;top:803.85px;width:190px;height:23.54px"><span class="x" style="transform:scaleX(1.0151)">Brown, Janet</span></div>
<div class="c" style="left:220.90px;top:827.89px;width:183.52px;height:23.54px"><div style="margin-left:-17.54px"><span class="x" style="transform:scaleX(1.0600)">Active</span></div></div>
<div class="c" style="left:411.12px;top:827.89px;width:196.46px;height:23.54px"><span class="x" style="transform:scaleX(0.9776)">BSN Students*</span></div>
<div class="c" style="left:1227.76px;top:827.89px;width:196.46px;height:23.54px"><span class="x" style="transform:scaleX(0.9926)">Direct Patient Care</span></div>
<div class="c" style="left:1431.92px;top:827.89px;width:196.46px;height:23.54px"><span class="x" style="transform:scaleX(0.9450)">19:30</span></div>
<div class="c" style="left:1636.08px;top:827.89px;width:196.46px;height:23.54px"><span class="x" style="transform:scaleX(0.9450)">00:00</span></div>
<div class="c" style="left:1840.24px;top:827.89px;width:196.46px;height:23.54px"><span class="x" style="transform:scaleX(0.9450)">0</span></div>
<div class="c" style="left:23.70px;top:827.89px;width:190px;height:23.54px"><span class="x" style="transform:scaleX(1.0151)">Brown, Janet</span></div>
<div class="c" style="left:220.90px;top:851.93px;width:183.52px;height:23.54px"><div style="margin-left:-17.54px"><span class="x" style="transform:scaleX(1.0600)">Active</span></div></div>
<div class="c" style="left:411.12px;top:851.93px;width:196.46px;height:23.54px"><span class="x" style="transform:scaleX(0.9776)">BSN Students*</span></div>
<div class="c" style="left:1227.76px;top:851.93px;width:196.46px;height:23.54px"><span class="x" style="transform:scaleX(0.9867)">In-Service Hours</span></div>
<div class="c" style="left:1431.92px;top:851.93px;width:196.46px;height:23.54px"><span class="x" style="transform:scaleX(0.9450)">26:00</span></div>
<div class="c" style="left:1636.08px;top:851.93px;width:196.46px;height:23.54px"><span class="x" style="transform:scaleX(0.9450)">00:00</span></div>
<div class="c" style="left:1840.24px;top:851.93px;width:196.46px;height:23.54px"><span class="x" style="transform:scaleX(0.9450)">0</span></div>
<div class="c" style="left:23.70px;top:851.93px;width:190px;height:23.54px"><span class="x" style="transform:scaleX(1.0151)">Brown, Janet</span></div>
<div class="c" style="left:220.90px;top:875.97px;width:183.52px;height:23.54px"><div style="margin-left:-17.54px"><span class="x" style="transform:scaleX(1.0600)">Active</span></div></div>
<div class="c" style="left:411.12px;top:875.97px;width:196.46px;height:23.54px"><span class="x" style="transform:scaleX(0.9776)">BSN Students*</span></div>
<div class="c" style="left:1227.76px;top:875.97px;width:196.46px;height:23.54px"><span class="x" style="transform:scaleX(1.0241)">Indirect Hours</span></div>
<div class="c" style="left:1431.92px;top:875.97px;width:196.46px;height:23.54px"><span class="x" style="transform:scaleX(0.9450)">26:15</span></div>
<div class="c" style="left:1636.08px;top:875.97px;width:196.46px;height:23.54px"><span class="x" style="transform:scaleX(0.9450)">00:00</span></div>
<div class="c" style="left:1840.24px;top:875.97px;width:196.46px;height:23.54px"><span class="x" style="transform:scaleX(0.9450)">0</span></div>
<div class="c" style="left:23.70px;top:875.97px;width:190px;height:23.54px"><span class="x" style="transform:scaleX(1.0151)">Brown, Janet</span></div>
<div class="c" style="left:220.90px;top:900.01px;width:183.52px;height:23.54px"><div style="margin-left:-17.54px"><span class="x" style="transform:scaleX(1.0600)">Active</span></div></div>
<div class="c" style="left:411.12px;top:900.01px;width:196.46px;height:23.54px"><span class="x" style="transform:scaleX(0.9776)">BSN Students*</span></div>
<div class="c" style="left:1227.76px;top:900.01px;width:196.46px;height:23.54px"><span class="x" style="transform:scaleX(1.0421)">Simulation</span></div>
<div class="c" style="left:1431.92px;top:900.01px;width:196.46px;height:23.54px"><span class="x" style="transform:scaleX(0.9450)">12:30</span></div>
<div class="c" style="left:1636.08px;top:900.01px;width:196.46px;height:23.54px"><span class="x" style="transform:scaleX(0.9450)">00:00</span></div>
<div class="c" style="left:1840.24px;top:900.01px;width:196.46px;height:23.54px"><span class="x" style="transform:scaleX(0.9450)">0</span></div>
<div class="c" style="left:23.70px;top:900.01px;width:190px;height:23.54px"><span class="x" style="transform:scaleX(1.0151)">Brown, Janet</span></div>
<div class="c" style="left:220.90px;top:924.05px;width:183.52px;height:23.54px"><div style="margin-left:-17.54px"><span class="x" style="transform:scaleX(1.0600)">Active</span></div></div>
<div class="c" style="left:411.12px;top:924.05px;width:196.46px;height:23.54px"><span class="x" style="transform:scaleX(0.9776)">BSN Students*</span></div>
<div class="c b" style="left:1227.76px;top:924.05px;width:196.46px;height:23.54px"><span class="x" style="transform:scaleX(1.0214)">Total</span></div>
<div class="c b" style="left:1431.92px;top:924.05px;width:196.46px;height:23.54px"><span class="x" style="transform:scaleX(0.9900)">161:15</span></div>
<div class="c b" style="left:1636.08px;top:924.05px;width:196.46px;height:23.54px"><span class="x" style="transform:scaleX(0.9900)">00:00</span></div>
<div class="c b" style="left:1840.24px;top:924.05px;width:196.46px;height:23.54px"><span class="x" style="transform:scaleX(0.9900)">0</span></div>
<div class="c" style="left:23.70px;top:924.05px;width:190px;height:23.54px"><span class="x" style="transform:scaleX(1.0151)">Brown, Janet</span></div>
<div class="c" style="left:220.90px;top:948.09px;width:183.52px;height:23.54px"><div style="margin-left:-17.54px"><span class="x" style="transform:scaleX(1.0600)">Active</span></div></div>
<div class="c" style="left:411.12px;top:948.09px;width:196.46px;height:23.54px"><span class="x" style="transform:scaleX(0.9776)">BSN Students*</span></div>
<div class="c" style="left:1227.76px;top:948.09px;width:196.46px;height:23.54px"><span class="x" style="transform:scaleX(0.9997)">Direct Hours</span></div>
<div class="c" style="left:1431.92px;top:948.09px;width:196.46px;height:23.54px"><span class="x" style="transform:scaleX(0.9450)">00:10</span></div>
<div class="c" style="left:1636.08px;top:948.09px;width:196.46px;height:23.54px"><span class="x" style="transform:scaleX(0.9450)">00:00</span></div>
<div class="c" style="left:1840.24px;top:948.09px;width:196.46px;height:23.54px"><span class="x" style="transform:scaleX(0.9450)">0</span></div>
<div class="c" style="left:23.70px;top:948.09px;width:190px;height:23.54px"><span class="x" style="transform:scaleX(1.0176)">Browning, Paul</span></div>
<div class="c" style="left:220.90px;top:972.13px;width:183.52px;height:23.54px"><div style="margin-left:-17.54px"><span class="x" style="transform:scaleX(1.0600)">Active</span></div></div>
<div class="c" style="left:411.12px;top:972.13px;width:196.46px;height:23.54px"><span class="x" style="transform:scaleX(0.9776)">BSN Students*</span></div>
<div class="c b" style="left:1227.76px;top:972.13px;width:196.46px;height:23.54px"><span class="x" style="transform:scaleX(1.0214)">Total</span></div>
<div class="c b" style="left:1431.92px;top:972.13px;width:196.46px;height:23.54px"><span class="x" style="transform:scaleX(0.9900)">00:10</span></div>
<div class="c b" style="left:1636.08px;top:972.13px;width:196.46px;height:23.54px"><span class="x" style="transform:scaleX(0.9900)">00:00</span></div>
<div class="c b" style="left:1840.24px;top:972.13px;width:196.46px;height:23.54px"><span class="x" style="transform:scaleX(0.9900)">0</span></div>
<div class="c" style="left:23.70px;top:972.13px;width:190px;height:23.54px"><span class="x" style="transform:scaleX(1.0176)">Browning, Paul</span></div>
</div>
<svg class="abs" style="left:2030px;top:180px" width="30" height="820" viewBox="2030 180 30 820"><path d="M2037 188.4h9.6a3.5 3.5 0 0 1 3.5 3.5V994.7H2037z" fill="#f9f9f9"/><path d="M2037 188.4h9.1a3.5 3.5 0 0 1 3.5 3.5V994.7" fill="none" stroke="#e2e2e2" stroke-width="1"/><rect x="2036.95" y="188.8" width="12.1" height="707.15" rx="6" fill="#bababa"/></svg>
<div id="blip"></div>

<div id="top"></div>
<svg class="abs" style="left:24px;top:14.5px" width="22" height="22" viewBox="0 0 22 22" fill="none" stroke="#1a1a1a" stroke-width="1.9" stroke-linecap="butt" stroke-linejoin="miter"><path d="M20.3 10.2H2.6M10.6 1.6 2 10.2l8.6 8.6"/></svg>
<div class="title">Hours by Categories</div>
<div class="vdiv" style="left:263px;top:10.5px;height:29.5px"></div>
<div class="sub">Timesheet</div>

<div id="filters"></div>
<svg class="abs" style="left:0;top:60px" width="2070" height="60" viewBox="0 60 2070 60" fill="#fff" stroke="#4250b3" stroke-width="1.6"><rect x="25.8" y="73.9" width="94.5" height="37.3" rx="4.6"/><rect x="1935.9" y="74.2" width="94.4" height="36.9" rx="4.6"/></svg>
<div class="btn-o" style="left:25px;top:73px;width:96px;height:39px;line-height:39.5px">All Filters</div>
<svg class="abs" style="left:0;top:60px" width="2070" height="60" viewBox="0 60 2070 60" fill="#fff" stroke="#c1c1c1" stroke-width="1.25"><rect x="146.00" y="71.80" width="317.60" height="43.20" rx="6.2" stroke="#ececec"/><rect x="475.20" y="71.80" width="317.60" height="43.20" rx="6.2" stroke="#ececec"/><rect x="804.40" y="71.80" width="317.60" height="43.20" rx="6.2" stroke="#ececec"/><rect x="1133.60" y="71.80" width="317.60" height="43.20" rx="6.2" stroke="#ececec"/><rect x="1462.80" y="71.80" width="317.60" height="43.20" rx="6.2" stroke="#ececec"/><rect x="146.00" y="71.10" width="317.60" height="43.20" rx="6.2"/><rect x="475.20" y="71.10" width="317.60" height="43.20" rx="6.2"/><rect x="804.40" y="71.10" width="317.60" height="43.20" rx="6.2"/><rect x="1133.60" y="71.10" width="317.60" height="43.20" rx="6.2"/><rect x="1462.80" y="71.10" width="317.60" height="43.20" rx="6.2"/></svg>
<div class="dd" style="left:145.4px">Cohort<svg width="11.6" height="6.4" viewBox="0 0 11.6 6.4"><path d="M0 0h11.6L5.8 6.4z" fill="#222"/></svg></div>
<div class="dd" style="left:474.6px">Student<svg width="11.6" height="6.4" viewBox="0 0 11.6 6.4"><path d="M0 0h11.6L5.8 6.4z" fill="#222"/></svg></div>
<div class="dd" style="left:803.8px">Rotation<svg width="11.6" height="6.4" viewBox="0 0 11.6 6.4"><path d="M0 0h11.6L5.8 6.4z" fill="#222"/></svg></div>
<div class="dd" style="left:1133.0px">Course<svg width="11.6" height="6.4" viewBox="0 0 11.6 6.4"><path d="M0 0h11.6L5.8 6.4z" fill="#222"/></svg></div>
<div class="dd" style="left:1462.2px">Status<svg width="11.6" height="6.4" viewBox="0 0 11.6 6.4"><path d="M0 0h11.6L5.8 6.4z" fill="#222"/></svg></div>
<div class="reset">Reset All</div>
<div class="vdiv" style="left:1915px;top:65px;height:55px"></div>
<div class="btn-o" style="left:1935px;top:73.5px;width:96px;height:38.5px;line-height:39px;font-size:16px;letter-spacing:-.52px">Group By</div>

<div class="show">Showing results based on selected filters</div>
<div class="gb">Group By:</div>
<div class="gbv">Student</div>
<svg class="abs" style="left:1850px;top:130px" width="160" height="56" viewBox="1850 130 160 56"><rect x="1861.1" y="139.5" width="141" height="38.3" rx="5.2" fill="#4650b0"/></svg>
<div class="gen">Generate Report</div>
<svg class="abs" style="left:2015px;top:145px" width="32" height="28" viewBox="0 0 32 28" fill="none" stroke="#262626" stroke-width="1.55" stroke-linejoin="round" stroke-linecap="round"><path d="M19.4 13.6V10.6a2 2 0 0 0-.6-1.4L14 4.5a2 2 0 0 0-1.4-.6H6.5a2.1 2.1 0 0 0-2.1 2.1v15.8a2.1 2.1 0 0 0 2.1 2.1h10.8a2.1 2.1 0 0 0 2.1-2.1v-1.7M12.5 4.1v5.1a1 1 0 0 0 1 1h5.6"/><path stroke-linecap="butt" stroke-linejoin="miter" d="M12 16.5h14.9M22.8 12.2l4.3 4.3-4.3 4.4"/></svg>

<svg class="abs" style="left:0;top:0;z-index:50" width="2070" height="1004" viewBox="0 0 2070 1004"><path fill="#000" fill-rule="evenodd" d="M3.75 1H2062.1a2.2 2.2 0 0 1 2.2 2.2V998.3a2.2 2.2 0 0 1-2.2 2.2H3.75a2.2 2.2 0 0 1-2.2-2.2V3.2A2.2 2.2 0 0 1 3.75 1zM6.86 4.8a1 1 0 0 0-1 1V995.4a1 1 0 0 0 1 1H2059.2a1 1 0 0 0 1-1V5.8a1 1 0 0 0-1-1z"/></svg>
</div>
</body>
</html>
